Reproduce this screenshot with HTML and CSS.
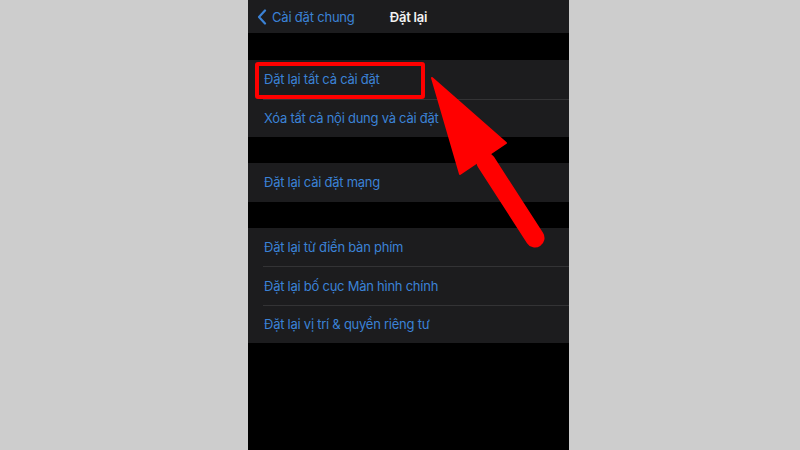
FILE: index.html
```html
<!DOCTYPE html>
<html lang="vi">
<head>
<meta charset="utf-8">
<link rel="stylesheet" href="styles.css">
</head>
<body>
<div class="stage">
  <div class="phone">
    <div class="nav">
      <div class="back">
        <svg class="chev" width="10" height="16" viewBox="0 0 10 16"><path d="M8 1.5 L2 8 L8 14.5" fill="none" stroke="#3b82d6" stroke-width="2.2" stroke-linecap="round" stroke-linejoin="round"/></svg>
        <span>Cài đặt chung</span>
      </div>
      <div class="title">Đặt lại</div>
      <div></div>
    </div>
    <div class="group">
      <div class="row"><div class="inner">Đặt lại tất cả cài đặt</div></div>
      <div class="row"><div class="inner">Xóa tất cả nội dung và cài đặt</div></div>
    </div>
    <div class="group">
      <div class="row"><div class="inner">Đặt lại cài đặt mạng</div></div>
    </div>
    <div class="group">
      <div class="row"><div class="inner">Đặt lại từ điển bàn phím</div></div>
      <div class="row"><div class="inner">Đặt lại bố cục Màn hình chính</div></div>
      <div class="row"><div class="inner">Đặt lại vị trí &amp; quyền riêng tư</div></div>
    </div>
  </div>
  <div class="highlight"></div>
  <svg class="arrow" width="800" height="450" viewBox="0 0 800 450">
    <line x1="486" y1="162" x2="535" y2="238" stroke="#ff0000" stroke-width="19" stroke-linecap="round"/>
    <polygon points="432,78 460,174 506,143" fill="#ff0000" stroke="#ff0000" stroke-width="2" stroke-linejoin="round"/>
  </svg>
</div>
</body>
</html>
```

FILE: styles.css
```css
* { box-sizing: border-box; }
html, body {
  margin: 0;
  padding: 0;
  background: #cdcdcd;
}
body {
  font-family: Inter, "Noto Sans", "DejaVu Sans", sans-serif;
}
.stage {
  position: relative;
  width: 800px;
  height: 450px;
  padding-left: 248px;
  display: flex;
}
.phone {
  width: 321px;
  height: 450px;
  background: #000;
  display: flex;
  flex-direction: column;
  gap: 26px;
}
.nav {
  height: 33px;
  background: #1c1c1e;
  display: grid;
  grid-template-columns: 1fr auto 1fr;
  align-items: center;
  margin-bottom: 1px;
}
.back {
  display: flex;
  align-items: center;
  gap: 5px;
  padding-left: 9px;
  color: #3b82d6;
  font-size: 13px;
  letter-spacing: -0.2px;
}
.chev { display: block; }
.title {
  color: #f2f2f2;
  font-size: 13px;
  font-weight: 600;
  letter-spacing: -0.2px;
}
.group {
  background: #1c1c1e;
}
.row {
  padding-left: 15px;
}
.inner {
  height: 38.5px;
  display: flex;
  align-items: center;
  padding-left: 1px;
  color: #3b82d6;
  font-size: 13px;
  letter-spacing: -0.25px;
}
.row + .row .inner {
  border-top: 1px solid #333335;
}
.highlight {
  position: absolute;
  left: 255px;
  top: 62px;
  width: 170px;
  height: 37px;
  border: 4px solid #ff0000;
  border-radius: 3px;
}
.arrow {
  position: absolute;
  left: 0;
  top: 0;
}
```
